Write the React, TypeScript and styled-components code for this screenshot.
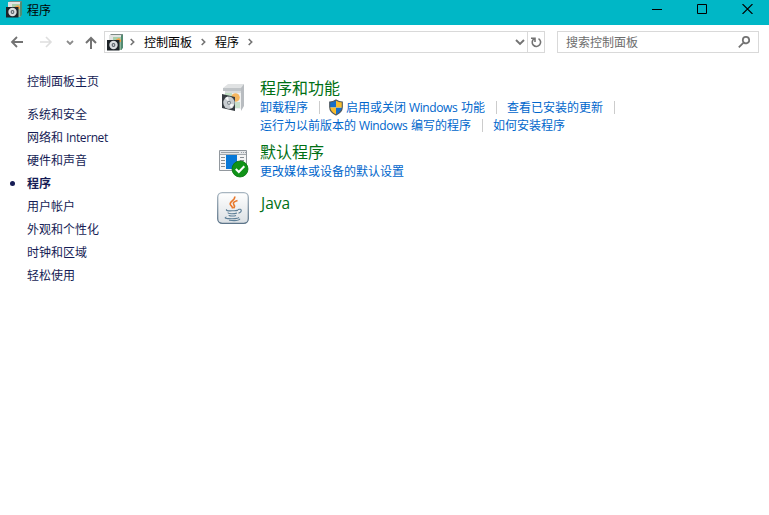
import React from 'react';
import styled, { createGlobalStyle } from 'styled-components';

const Global = createGlobalStyle`
  * { box-sizing: border-box; }
  body {
    margin: 0;
    background: #fff;
    font: 12px/18px "Noto Sans CJK SC", sans-serif;
    overflow: hidden;
  }
  svg { display: block; flex: none; }
`;

const Window = styled.div`
  width: 769px;
  height: 515px;
  display: flex;
  flex-direction: column;
  background: #fff;
`;
const TitleBar = styled.header`
  height: 25px;
  display: flex;
  align-items: center;
  background: #00b7c6;
  color: #000;
  padding: 0 16px 7px 6px;
`;
const Title = styled.span`
  flex: 1;
  margin-left: 5px;
  padding-top: 2px;
`;
const WindowButtons = styled.div`
  display: flex;
  gap: 35px;
`;
const NavBar = styled.nav`
  height: 34px;
  display: flex;
  align-items: center;
  padding-left: 10px;
`;
const NavIcon = styled.span<{ $gap: number }>`
  margin-right: ${(p) => p.$gap}px;
`;
const AddressBar = styled.div`
  width: 441px;
  height: 22px;
  display: flex;
  align-items: center;
  border: 1px solid #d9d9d9;
  padding-left: 2px;
`;
const Crumb = styled.span<{ $before: number; $after: number }>`
  margin: 0 ${(p) => p.$after}px 0 ${(p) => p.$before}px;
  line-height: 18px;
  padding-bottom: 1px;
`;
const Spacer = styled.span`
  flex: 1;
`;
const Refresh = styled.span`
  width: 17px;
  height: 20px;
  display: flex;
  align-items: center;
  justify-content: center;
  margin-left: 2px;
  border-left: 1px solid #d9d9d9;
`;
const SearchBox = styled.div`
  width: 202px;
  height: 22px;
  display: flex;
  align-items: center;
  justify-content: space-between;
  margin-left: 12px;
  padding: 0 8px;
  border: 1px solid #d9d9d9;
  color: #6d6d6d;
`;
const Body = styled.div`
  flex: 1;
  display: flex;
`;
const Sidebar = styled.aside`
  width: 217px;
  padding: 10px 0 0 10px;
  color: #151c55;
`;
const SideLink = styled.div<{ $current?: boolean; $home?: boolean }>`
  height: 23px;
  display: flex;
  align-items: center;
  margin-bottom: ${(p) => (p.$home ? 10 : 0)}px;
  font-weight: ${(p) => (p.$current ? 700 : 400)};
  &::before {
    content: '';
    width: 5px;
    height: 5px;
    margin: 2px 12px 0 0;
    border-radius: 50%;
    background: ${(p) => (p.$current ? '#151c55' : 'transparent')};
  }
`;
const Main = styled.main`
  flex: 1;
  padding-top: 18px;
`;
const Category = styled.section<{ $height: number }>`
  height: ${(p) => p.$height}px;
  display: flex;
`;
const IconCell = styled.div<{ $top: number }>`
  width: 43px;
  padding-top: ${(p) => p.$top}px;
`;
const Heading = styled.h2<{ $latin?: boolean }>`
  height: 21px;
  margin: 0;
  color: #007014;
  font: 400 ${(p) => (p.$latin ? '15.5px/22px "Open Sans"' : '16px/20px "Noto Sans CJK SC"')}, sans-serif;
  padding-left: ${(p) => (p.$latin ? 1 : 0)}px;
`;
const LinkRow = styled.div`
  height: 18px;
  display: flex;
  align-items: center;
  color: #0066cc;
  white-space: nowrap;
`;
const Divider = styled.span<{ $after?: number }>`
  width: 1px;
  height: 13px;
  margin: 0 ${(p) => p.$after ?? 10}px 0 11px;
  background: #ccc;
`;
const Latin = styled.span<{ $width: number }>`
  display: inline-block;
  width: ${(p) => p.$width}px;
  padding-left: 3px;
  font-family: "Open Sans", sans-serif;
  line-height: 16px;
  letter-spacing: -0.4px;
`;
const ShieldLabel = styled.span`
  margin-left: 2px;
`;

const Stroke = ({ w, h, d, color = '#737373', sw = 2 }: { w: number; h: number; d: string; color?: string; sw?: number }) => (
  <svg width={w} height={h} viewBox={`0 0 ${w} ${h}`} fill="none" stroke={color} strokeWidth={sw}>
    <path d={d} />
  </svg>
);
const Chevron = () => <Stroke w={5} h={8} d="M.7 1 3.7 4 .7 7" sw={1.6} />;

const SmallProgramIcon = () => (
  <svg width="16" height="17" viewBox="0 0 16 17">
    <path d="M2 2 4 0h12l-1 2z" fill="#7d8a86" />
    <path d="M2 1h12v14H2z" fill="#e2e4e3" />
    <path d="M6 3h8v4H6z" fill="#a8cfab" />
    <path d="M9 5.500 12 4l2 2v5h-2z" fill="#eea04b" />
    <path d="M12 8h3v8h-3z" fill="#8fb79c" />
    <path d="m14 2 2-2v14l-2 2z" fill="#538b72" />
    <path d="M0 6h12.500v10.500H0z" fill="#1d2327" />
    <circle cx="6.500" cy="11" r="4.200" fill="#d9dcde" />
    <circle cx="6.500" cy="11" r="1.900" fill="#596269" />
    <circle cx="6.500" cy="11" r=".8" fill="#fff" />
  </svg>
);

const ProgramIcon = () => (
  <svg width="32" height="32" viewBox="0 0 32 32">
    <path d="M6 5 11 1h16l-2 4z" fill="#e0e2e3" />
    <path d="M8 6h16v20H8z" fill="#eff0f0" />
    <path d="m24 5 3-4v22l-3 5z" fill="#b8bcc0" />
    <path d="M6 5h18v3H6z" fill="#c0c4c7" />
    <path d="M8 8h16v2H8z" fill="#d9dcdd" />
    <path d="M8 10h7v6H8z" fill="#c2dfc4" />
    <circle cx="18.500" cy="14.500" r="4.300" fill="#f5b660" />
    <path d="M17 19h6v6h-6z" fill="#c8dfcb" />
    <path d="m5 11 13 3v14L5 25z" fill="#353b40" />
    <ellipse cx="12" cy="19.800" rx="5.700" ry="6.200" fill="#c8cdd1" />
    <path d="m12 19-4-4 3-1.500zm0 1.500 5 1-3 4z" fill="#f7f8f8" />
    <ellipse cx="12" cy="19.800" rx="1.900" ry="2.100" fill="#778087" />
    <circle cx="12" cy="19.800" r=".9" fill="#fff" />
  </svg>
);

const DefaultsIcon = () => (
  <svg width="32" height="32" viewBox="0 0 32 32">
    <path d="M2.500 4.500h27v20h-27z" fill="#f5f5f5" stroke="#92989e" />
    <path d="M3 5h26v3H3z" fill="#e5e7e9" />
    <path d="M4 6.500h18M24 6.500h1M26 6.500h1M28 6.500h1" stroke="#9ba1a6" />
    <path d="M3 8.500h26" stroke="#a5aaae" />
    <path d="M4 11.500h4M4 14.500h4M4 17.500h4M4 20.500h4M23 11.500h4M23 14.500h4" stroke="#858c92" />
    <path d="M9 9h11v14H9z" fill="#0878d7" />
    <circle cx="23" cy="23" r="8" fill="#109318" stroke="#08740d" strokeWidth=".8" />
    <path d="m18.800 23 3 3 5.500-5.800" fill="none" stroke="#fff" strokeWidth="2" />
  </svg>
);

const JavaIcon = () => (
  <svg width="32" height="32" viewBox="0 0 32 32" fill="none">
    <defs>
      <linearGradient id="tile" x1="0" y1="0" x2="0" y2="1">
        <stop stopColor="#fff" />
        <stop offset="1" stopColor="#dbe0e4" />
      </linearGradient>
      <linearGradient id="rim" x1="0" y1="0" x2="0" y2="1">
        <stop stopColor="#a7b5c0" />
        <stop offset="1" stopColor="#5c7489" />
      </linearGradient>
    </defs>
    <rect x=".7" y=".7" width="30.600" height="30.600" rx="4.500" fill="url(#tile)" stroke="url(#rim)" strokeWidth="1.300" />
    <path d="M17.500 4.500c2 3-5.500 5-4.200 8 .6 1.500 2.500 2 2.200 4M20.500 8.500c-3 1-5.200 2-3.700 4 1.200 1.500.8 2.700-.3 3.800" stroke="#e9782b" strokeWidth="1.600" />
    <path d="M10 17.500c-2 1 1 1.500 5 1.300 3 0 5.500-.4 6-.8M11 20.500c0 1.500 6 1.600 9 .4M12 23c0 1.300 5 1.300 7 .4M21 17.500c4-1.300 4.500 2.200.5 3.800M9.500 25c-3 1-1 1.800 5.500 1.800 5 0 7-.8 6.500-1.500M12 28.200c5 .7 10 .2 11-1.400" stroke="#5d7f97" strokeWidth="1.100" />
  </svg>
);

const Shield = () => (
  <svg width="16" height="17" viewBox="0 0 16 17">
    <defs>
      <clipPath id="shield">
        <path d="M8 1c2 1.400 4 2 6.300 2v5c0 3.800-2.800 6.400-6.300 8-3.500-1.600-6.300-4.200-6.300-8V3C4 3 6 2.400 8 1z" />
      </clipPath>
    </defs>
    <g clipPath="url(#shield)">
      <path d="M0 0h8v8.500H0zm8 8.500h8V17H8z" fill="#176fca" />
      <path d="M8 0h8v8.500H8zM0 8.500h8V17H0z" fill="#f8bd2d" />
    </g>
    <path d="M8 1c2 1.400 4 2 6.300 2v5c0 3.800-2.800 6.400-6.300 8-3.500-1.600-6.300-4.200-6.300-8V3C4 3 6 2.400 8 1z" fill="none" stroke="#4f565b" strokeWidth="1.100" />
  </svg>
);

const sideItems = ['系统和安全', 'network', '硬件和声音', '程序', '用户帐户', '外观和个性化', '时钟和区域', '轻松使用'];

export default function App() {
  return (
    <Window>
      <Global />
      <TitleBar>
        <SmallProgramIcon />
        <Title>程序</Title>
        <WindowButtons>
          <Stroke w={10} h={10} d="M0 5.500h10" color="#000" sw={1} />
          <Stroke w={10} h={10} d="M.5.500h9v9h-9z" color="#000" sw={1} />
          <Stroke w={11} h={10} d="m.5 0 10 10m0-10L.5 10" color="#000" sw={1.1} />
        </WindowButtons>
      </TitleBar>
      <NavBar>
        <NavIcon $gap={17}><Stroke w={13} h={12} d="M13 6H2M7 1 2 6l5 5" sw={1.8} /></NavIcon>
        <NavIcon $gap={13}><Stroke w={13} h={12} d="M0 6h11M6 1l5 5-5 5" color="#dedede" sw={1.6} /></NavIcon>
        <NavIcon $gap={11}><Stroke w={8} h={5} d="M1 1l3 3 3-3" color="#8b8b8b" sw={1.8} /></NavIcon>
        <NavIcon $gap={7}><Stroke w={12} h={13} d="M6 13V2M1 7l5-5 5 5" sw={2} /></NavIcon>
        <AddressBar>
          <SmallProgramIcon />
          <Crumb $before={7} $after={9}><Chevron /></Crumb>
          <Crumb $before={0} $after={9}>控制面板</Crumb>
          <Chevron />
          <Crumb $before={9} $after={9}>程序</Crumb>
          <Chevron />
          <Spacer />
          <Stroke w={10} h={7} d="m1 1 4 4 4-4" sw={1.9} />
          <Refresh>
            <Stroke w={11} h={12} d="M7.500 2.600A4.200 4.200 0 1 1 3 2.800M4 6V2.200H0" sw={1.6} />
          </Refresh>
        </AddressBar>
        <SearchBox>
          搜索控制面板
          <Stroke w={12} h={12} d="M4.800 4A3.200 3.200 0 1 1 9 7.200 3.200 3.200 0 0 1 4.800 4M5.300 6.800.8 11.300" sw={1.8} />
        </SearchBox>
      </NavBar>
      <Body>
        <Sidebar>
          <SideLink $home>控制面板主页</SideLink>
          {sideItems.map((item) => (
            <SideLink key={item} $current={item === '程序'}>
              {item === 'network' ? <span>网络和<Latin $width={45}>Internet</Latin></span> : item}
            </SideLink>
          ))}
        </Sidebar>
        <Main>
          <Category $height={64}>
            <IconCell $top={6}><ProgramIcon /></IconCell>
            <div>
              <Heading>程序和功能</Heading>
              <LinkRow>
                卸载程序<Divider $after={8} /><Shield />
                <ShieldLabel>启用或关闭<Latin $width={55}>Windows</Latin>功能</ShieldLabel>
                <Divider />查看已安装的更新<Divider />
              </LinkRow>
              <LinkRow>
                <span>运行为以前版本的<Latin $width={55}>Windows</Latin>编写的程序</span>
                <Divider />如何安装程序
              </LinkRow>
            </div>
          </Category>
          <Category $height={51}>
            <IconCell $top={5}><DefaultsIcon /></IconCell>
            <div>
              <Heading>默认程序</Heading>
              <LinkRow>更改媒体或设备的默认设置</LinkRow>
            </div>
          </Category>
          <Category $height={32}>
            <IconCell $top={0}><JavaIcon /></IconCell>
            <Heading $latin>Java</Heading>
          </Category>
        </Main>
      </Body>
    </Window>
  );
}
